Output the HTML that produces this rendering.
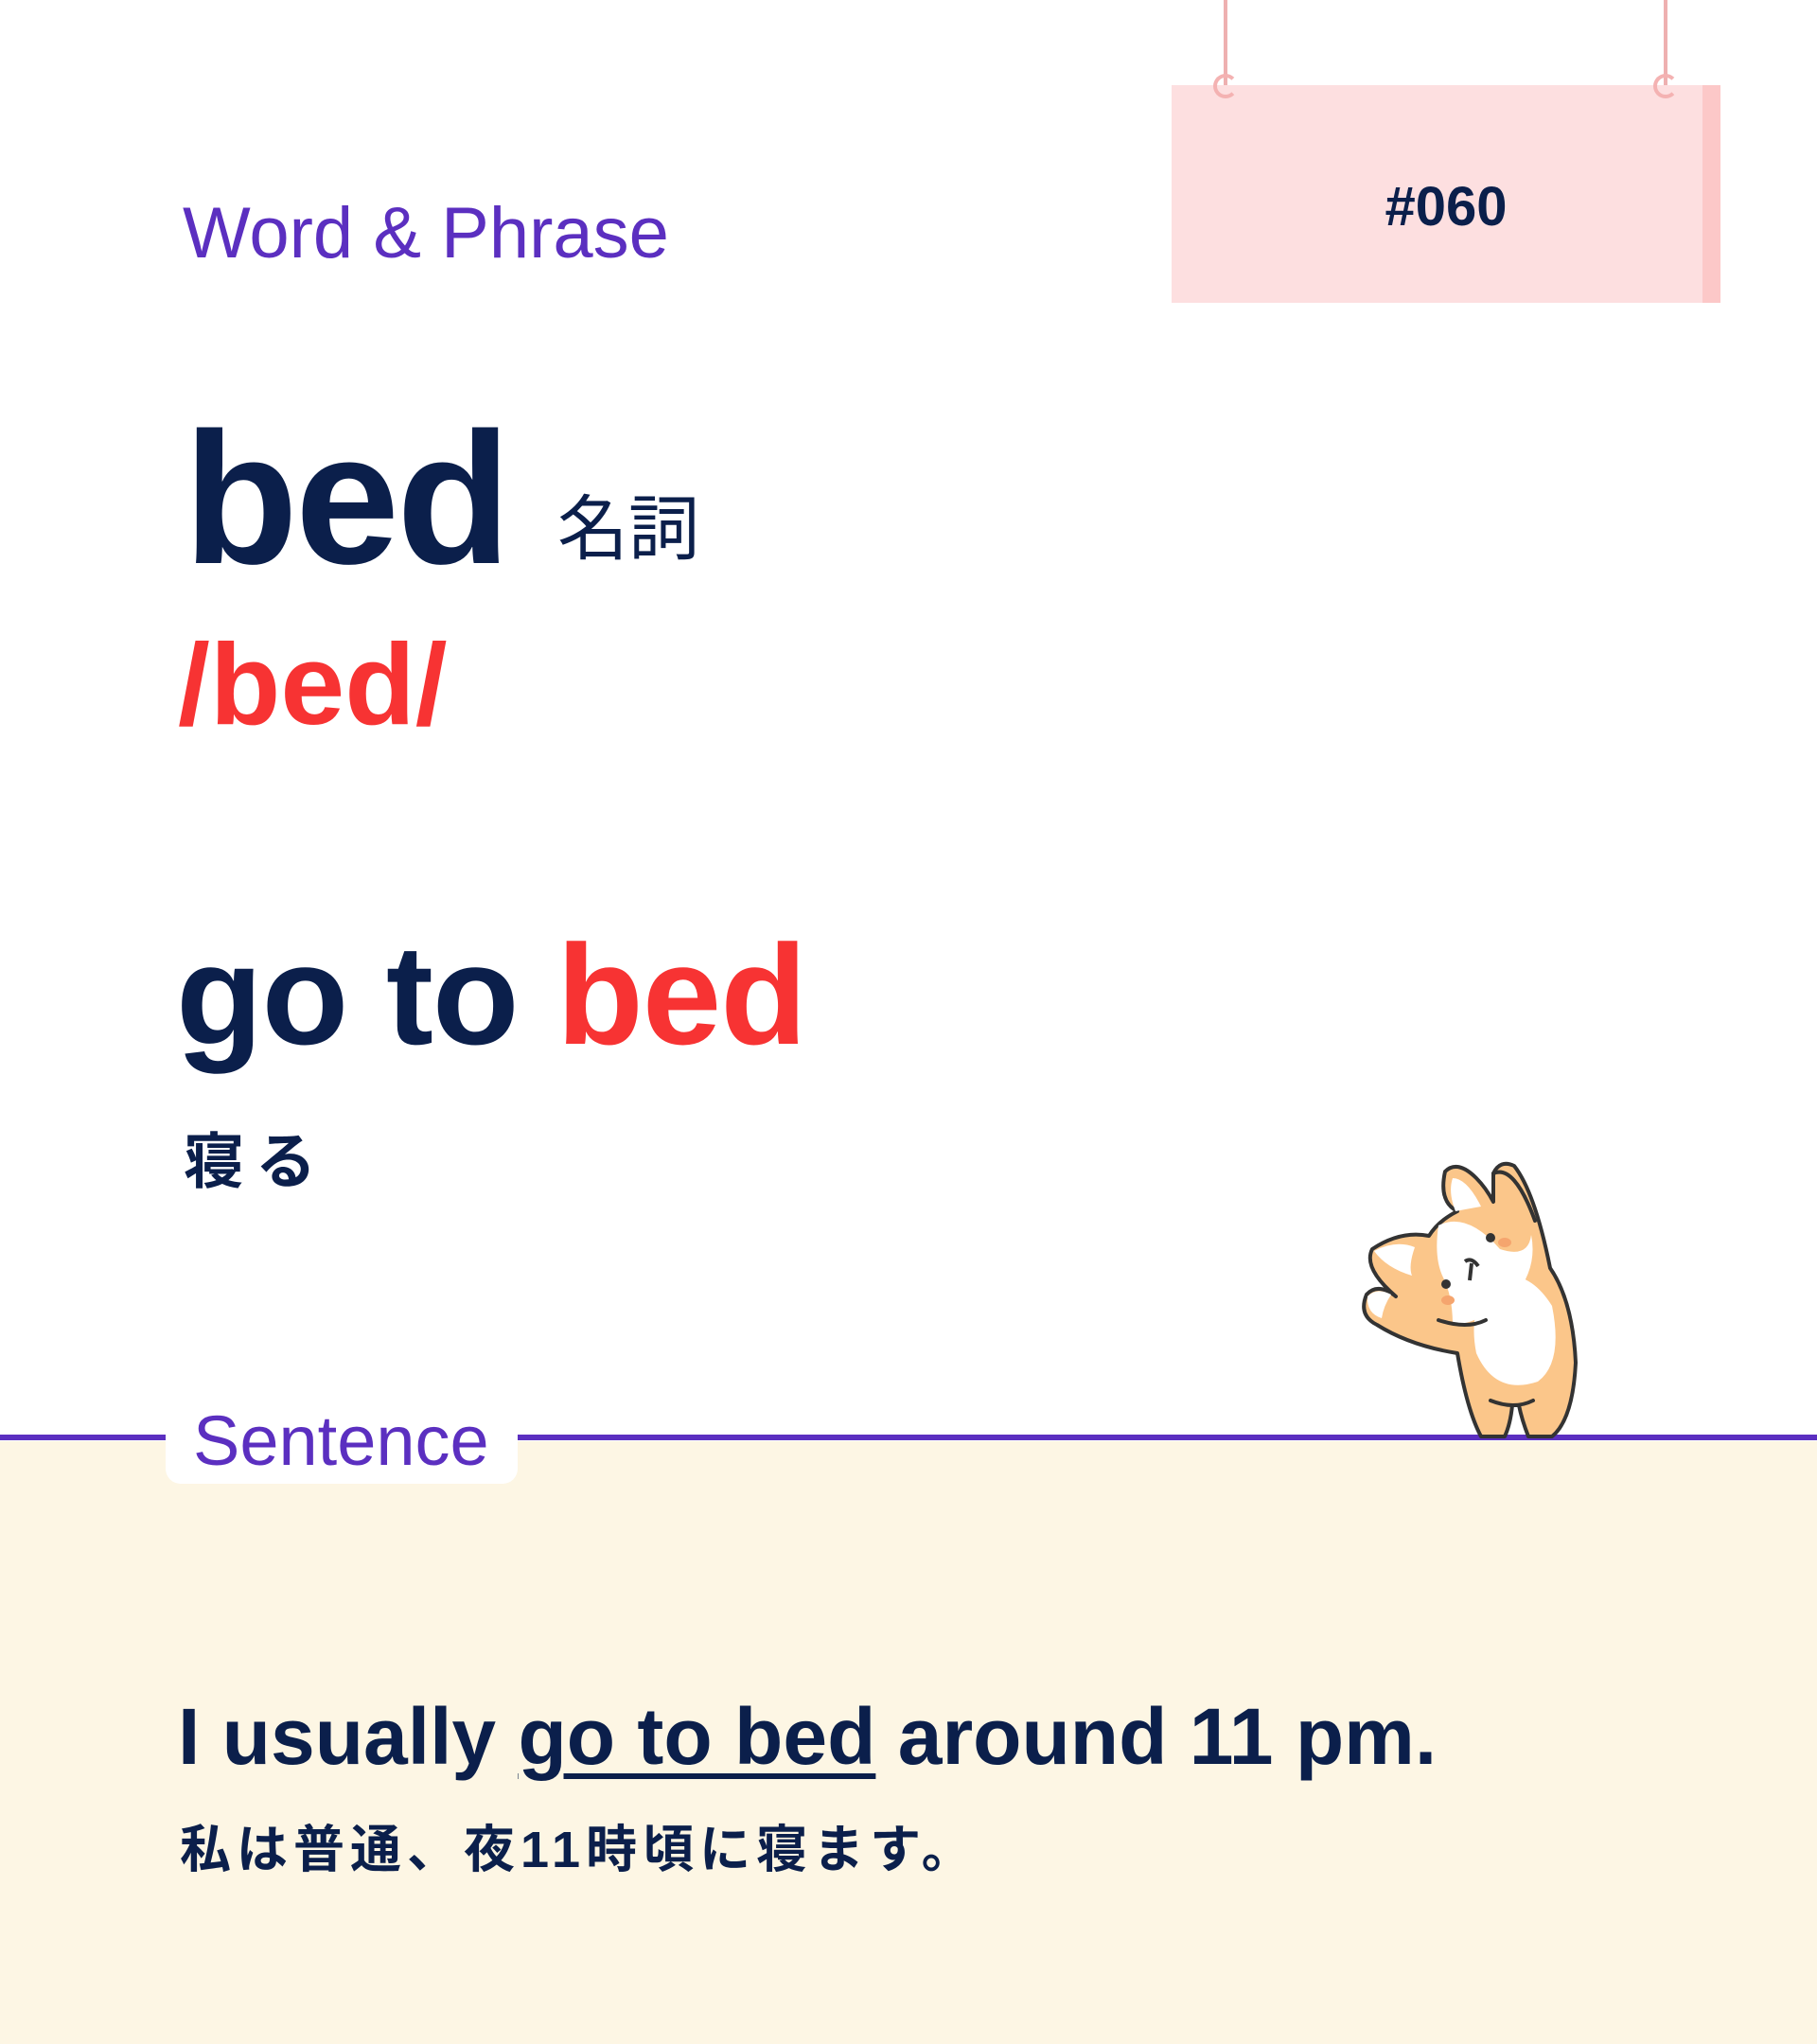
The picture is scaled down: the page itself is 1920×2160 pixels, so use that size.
<!DOCTYPE html>
<html><head><meta charset="utf-8"><style>
html,body{margin:0;padding:0}
body{width:1920px;height:2160px;position:relative;background:#fff;overflow:hidden;font-family:"Liberation Sans","Noto Sans CJK JP",sans-serif;color:#0b1f4b}
.a{position:absolute;white-space:nowrap;line-height:1}
</style></head><body>
<div class="a" style="left:0;top:1523px;width:1920px;height:637px;background:#fdf6e4"></div>
<div class="a" style="left:0;top:1516px;width:1920px;height:6px;background:#5b2fc0"></div>
<div class="a" style="left:175px;top:1478px;width:372px;height:90px;background:#fff;border-radius:16px"></div>
<div class="a" style="left:204px;top:1486px;font-size:74px;color:#5b2fc0">Sentence</div>

<!-- sign -->
<div class="a" style="left:1293px;top:0;width:4px;height:90px;background:#eeb0b0"></div>
<div class="a" style="left:1758px;top:0;width:4px;height:90px;background:#eeb0b0"></div>
<div class="a" style="left:1238px;top:90px;width:580px;height:230px;background:#fddfe0"></div>
<div class="a" style="left:1799px;top:90px;width:19px;height:230px;background:#fcc8c8"></div>
<div class="a" style="left:1282px;top:78px;width:18px;height:18px;border:4px solid #f4b2b2;border-radius:50%;border-right-color:transparent"></div>
<div class="a" style="left:1747px;top:78px;width:18px;height:18px;border:4px solid #f4b2b2;border-radius:50%;border-right-color:transparent"></div>
<div class="a" style="left:1238px;top:190px;width:580px;text-align:center;font-size:58px;font-weight:bold">#060</div>

<div class="a" style="left:193px;top:209px;font-size:76px;color:#5b2fc0">Word &amp; Phrase</div>
<div class="a" style="left:194px;top:428px;font-size:198px;font-weight:bold;letter-spacing:-3px">bed</div>
<div class="a" style="left:589px;top:522px;font-size:75px">名詞</div>
<div class="a" style="left:188px;top:662px;font-size:122px;font-weight:bold;color:#f73333">/bed/</div>
<div class="a" style="left:186px;top:976px;font-size:150px;font-weight:bold;letter-spacing:-1px">go to <span style="color:#f73333">bed</span></div>
<div class="a" style="left:194px;top:1196px;font-size:64px;font-weight:bold;letter-spacing:12px">寝る</div>

<div class="a" style="left:188px;top:1793px;font-size:84px;font-weight:bold">I usually <span style="text-decoration:underline;text-decoration-thickness:6px;text-underline-offset:10px">go to bed</span> around 11 pm.</div>
<div class="a" style="left:190px;top:1928px;font-size:54px;font-weight:bold;letter-spacing:6px">私は普通、夜11時頃に寝ます。</div>

<!-- corgi -->
<svg class="a" style="left:1400px;top:1200px" width="300" height="330" viewBox="0 0 300 330">
<g stroke="#333" stroke-width="4" stroke-linejoin="round" stroke-linecap="round">
<path d="M178 40 Q185 25 200 32 Q222 60 238 140 Q262 175 265 240 Q262 300 240 318 L215 318 Q208 300 205 285 L198 285 Q196 305 190 318 L165 318 Q150 290 140 230 Q90 222 55 200 Q35 190 44 168 Q56 155 75 170 Q40 140 50 120 Q80 100 110 106 Q120 90 140 80 Q120 70 127 38 Q140 25 160 45 Q170 55 178 70 Z" fill="#fbc68a"/>
<path d="M160 230 Q150 180 180 150 Q215 140 240 180 Q252 240 225 260 Q180 275 160 230Z" fill="#fff" stroke="none"/>
<path d="M120 95 Q150 80 185 120 Q215 130 218 105 Q225 140 200 170 Q160 200 135 200 Q135 170 125 150 Q115 130 120 95Z" fill="#fff" stroke="none"/>
<path d="M52 122 Q75 110 95 118 Q88 138 92 148 Q65 140 52 122Z" fill="#fff" stroke="none"/>
<path d="M135 45 Q150 45 165 75 Q148 78 138 80 Q130 60 135 45Z" fill="#fff" stroke="none"/>
<path d="M45 170 Q55 160 70 168 Q62 180 60 193 Q44 188 45 170Z" fill="#fff" stroke="none"/>
<path d="M178 40 Q200 30 222 90" fill="none"/>
<path d="M120 195 Q150 205 170 195" fill="none"/>
<path d="M175 280 Q200 290 220 280" fill="none"/>
</g>
<circle cx="175" cy="108" r="5" fill="#333"/><circle cx="128" cy="157" r="5" fill="#333"/>
<ellipse cx="190" cy="113" rx="7" ry="5" fill="#f5a56e"/><ellipse cx="130" cy="174" rx="7" ry="5" fill="#f5a56e"/>
<path d="M148 133 Q155 128 162 138 M155 135 L153 153" stroke="#333" stroke-width="4" fill="none"/>
</svg>
</body></html>
